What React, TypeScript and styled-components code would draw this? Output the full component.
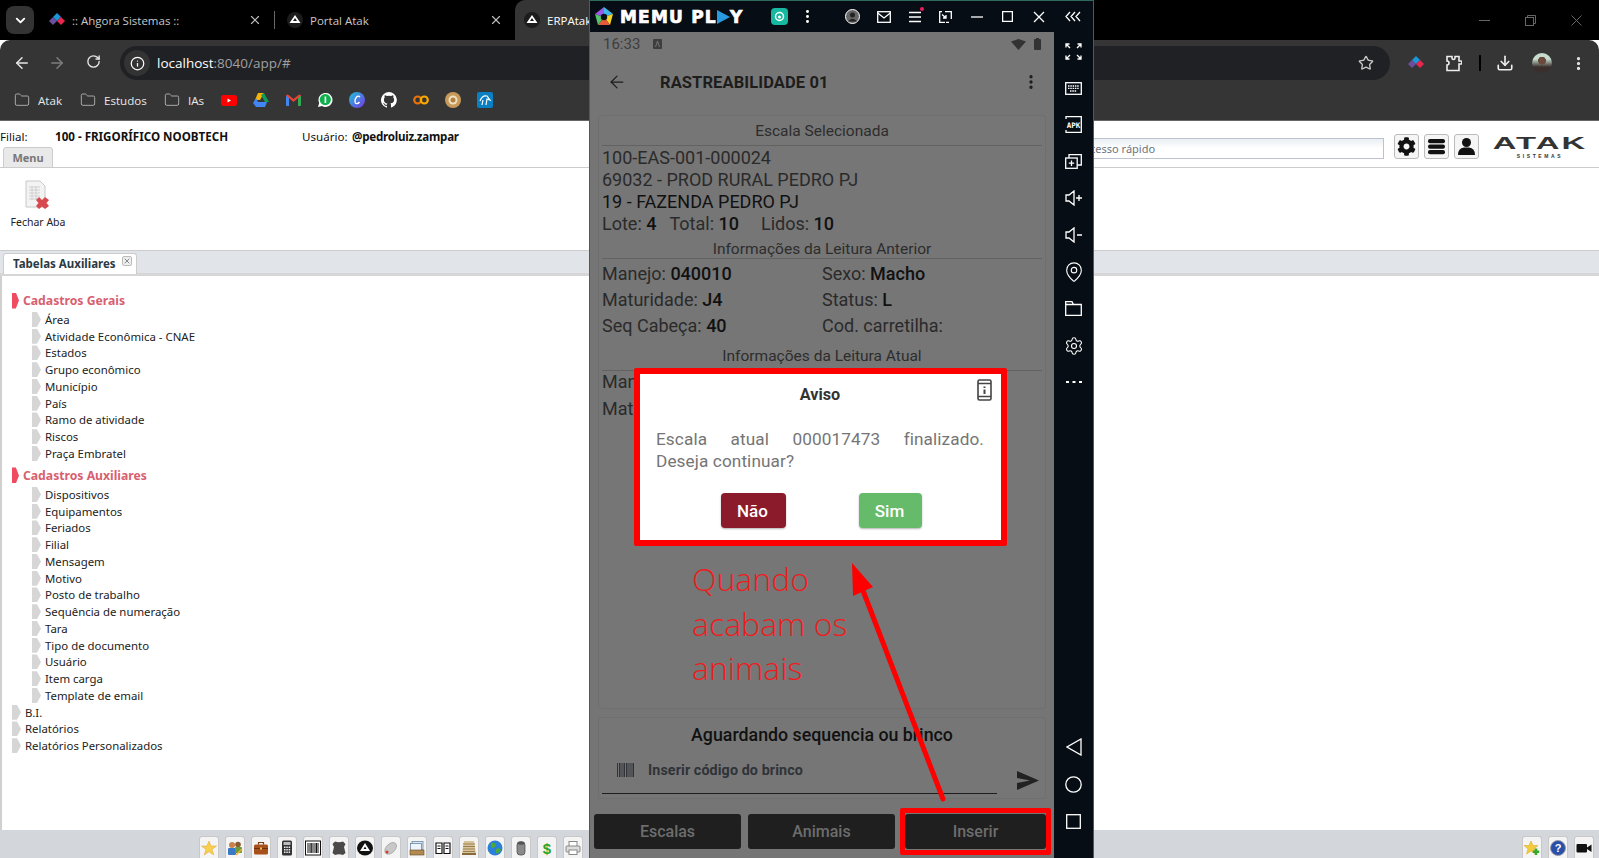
import React from "react";
import styled, { createGlobalStyle } from "styled-components";
import { FaCog } from "react-icons/fa";
import {
  ArrowLeft, ArrowRight, RotateCw, Info, Star, Download, MoreVertical, Folder, X, ChevronDown, Settings, MapPin,
} from "lucide-react";

const Global = createGlobalStyle`
  html, body { margin: 0; padding: 0; background: #fff; overflow: hidden; }
  * { box-sizing: border-box; }
`;

const Page = styled.div`
  position: relative; width: 1599px; height: 858px; overflow: hidden;
  display: flex; flex-direction: column; font-family: "Noto Sans", sans-serif; background: #fff;
`;

/* ---------- browser chrome ---------- */
const TabStrip = styled.div`
  height: 40px; background: #000; display: flex; align-items: stretch; color: #c7c7c7;
  font: 11.5px "Open Sans", sans-serif; flex: none;
`;
const TabMenu = styled.div`
  width: 28px; height: 28px; margin: 6px 15px 0 6px; border-radius: 8px; background: #333;
  display: flex; align-items: center; justify-content: center; color: #fff;
`;
const BrowserTab = styled.div<{ $w: number; $pl: number; $active?: boolean }>`
  width: ${(p) => p.$w}px; height: 40px; display: flex; align-items: center; gap: 7px; padding-left: ${(p) => p.$pl}px;
  position: relative; flex: none;
  ${(p) => p.$active && "background:#353535;border-radius:10px 10px 0 0;color:#fff;"}
`;
const TabTitle = styled.span`flex: 1; white-space: nowrap; overflow: hidden;`;
const TabClose = styled.span`display: flex; color: #bbb; margin-right: 12px;`;
const TabSep = styled.div`width: 1px; height: 18px; background: #666; align-self: center; margin: 0 10px 0 0; flex: none;`;
const Fav = styled.span`
  width: 16px; height: 16px; flex: none; display: flex; align-items: center; justify-content: center;
`;
const WinCtl = styled.div`margin-left: auto; display: flex; align-items: center; color: #666;`;
const WinBtn = styled.span`width: 46px; display: flex; justify-content: center;`;

const ToolBar = styled.div`
  height: 40px; background: #353535; border-radius: 10px 10px 0 0; display: flex; align-items: center; flex: none; color: #d8d8d8;
  padding: 6px 0 0 0;
`;
const NavBtn = styled.span<{ $dim?: boolean; $w: number }>`
  width: ${(p) => p.$w}px; display: flex; justify-content: center; color: ${(p) => (p.$dim ? "#7d7d7d" : "#e6e6e6")};
`;
const NavGroup = styled.div`display: flex; margin: 0 7px 0 4px;`;
const Omni = styled.div`
  width: 1270px; height: 34px; border-radius: 17px; background: #202124; display: flex; align-items: center; padding-left: 4px;
  font: 13.5px "Open Sans", sans-serif; color: #fff;
`;
const InfoBubble = styled.span`
  width: 26px; height: 26px; border-radius: 13px; background: #333; display: flex; align-items: center; justify-content: center; margin-right: 7px;
`;
const UrlDim = styled.span`color: #a0a0a0;`;
const OmniStar = styled.span`margin-left: auto; margin-right: 16px; display: flex; color: #c8c8c8;`;
const ExtIcons = styled.div`display: flex; align-items: center; margin-left: 15px;`;
const ExtBtn = styled.span<{ $w: number }>`width: ${(p) => p.$w}px; display: flex; justify-content: center; color: #eee;`;
const ExtSep = styled.span`width: 2px; height: 16px; background: #000; margin: 0 14px 0 0;`;
const Avatar = styled.span`
  width: 20px; height: 20px; border-radius: 50%;
  background: radial-gradient(circle at 50% 38%, #6a4a3c 24%, transparent 26%), linear-gradient(#c6dccf 30%, #3a2f2c 70%);
`;

const BookBar = styled.div`
  height: 41px; background: #353535; border-bottom: 1px solid #666; display: flex; align-items: center; padding-left: 14px; flex: none;
  color: #e8e8e8; font: 11.6px "Open Sans", sans-serif;
`;
const BookFolder = styled.span<{ $w: number }>`
  display: flex; align-items: center; gap: 8px; width: ${(p) => p.$w}px; flex: none; svg { color: #b8b8b8; }
`;
const BookIcon = styled.span`width: 32px; height: 16px; display: flex; justify-content: center; align-items: center;`;

/* ---------- ERP app ---------- */
const Header = styled.div`
  height: 26px; display: flex; align-items: flex-start; padding-top: 8px; font-size: 11.6px; line-height: 16px; color: #111; flex: none;
`;
const HeaderLabel = styled.span<{ $w: number }>`width: ${(p) => p.$w}px; flex: none;`;
const HeaderValue = styled.b<{ $w: number; $ls?: number }>`
  width: ${(p) => p.$w}px; flex: none; font-weight: 700; letter-spacing: ${(p) => p.$ls ?? 0}px;
`;
const TopRight = styled.div`
  margin-left: auto; display: flex; align-items: center; margin-top: 5px; padding-right: 12px;
`;
const QuickInput = styled.div`
  width: 310px; height: 21px; margin-top: 4px; border: 1px solid #bcc2d0; background: linear-gradient(#e9eff2, #fff 50%); color: #6c7480;
  font-size: 11px; line-height: 19px; padding-left: 8px; margin-right: 10px;
`;
const TopBtn = styled.span`
  width: 25px; height: 25px; border: 1px solid #bbb; border-radius: 3px; background: #f5f5f5; display: flex; align-items: center; justify-content: center; margin-right: 5px;
`;
const LogoBox = styled.div`
  width: 94px; margin-left: 9px; display: flex; flex-direction: column; align-items: center; color: #333; line-height: 1;
`;
const LogoName = styled.span`font: 900 16px "Liberation Sans", sans-serif; letter-spacing: 1px; transform: scaleX(2.05);`;
const LogoSub = styled.span`font: 700 5px "Liberation Sans", sans-serif; letter-spacing: 2.6px; margin-top: 0;`;

const MenuRow = styled.div`height: 21px; border-bottom: 1px solid #ccc; padding-left: 3px; flex: none;`;
const MenuTab = styled.div`
  width: 50px; height: 21px; border: 1px solid #ccc; border-radius: 3px 3px 0 0; background: #e9e9e9; color: #777; font-weight: 700; font-size: 11px;
  display: flex; align-items: center; justify-content: center;
`;
const Ribbon = styled.div`height: 82px; flex: none; padding: 12px 0 0 11px;`;
const RibbonBtn = styled.div`width: 54px; display: flex; flex-direction: column; align-items: center; font-size: 10.5px; color: #222; gap: 5px; white-space: nowrap;`;
const WorkTabs = styled.div`
  height: 26px; background: #e1e5ea; border-top: 1px solid #ccc; border-bottom: 3px solid #d6d6d6; padding: 2px 0 0 3px; flex: none;
`;
const WorkTab = styled.div`
  position: relative; width: 134px; height: 21px; background: #fff; border: 1px solid #ccc; border-bottom: none; border-radius: 3px 3px 0 0;
  font-size: 11.5px; font-weight: 700; color: #2b3a44; padding-left: 9px; line-height: 20px;
`;
const WorkClose = styled.span`
  position: absolute; right: 4px; top: 2px; width: 10px; height: 10px; border: 1px solid #bbb; border-radius: 2px; background: #eee; color: #888;
  display: flex; align-items: center; justify-content: center;
`;
const TreePane = styled.div`
  flex: 1; border-left: 2px solid #d0d0d0; padding: 15.5px 0 0 10px; font-size: 11.4px; color: #222; min-height: 0;
`;
const SectionHead = styled.div<{ $mt: number }>`
  height: 18px; display: flex; align-items: center; gap: 4px; color: #d8606f; font-weight: 700; font-size: 12.2px; margin: ${(p) => p.$mt}px 0 1.6px 0;
`;
const Chevron = styled.i<{ $red?: boolean }>`
  flex: none; display: block; width: ${(p) => (p.$red ? 7 : 9)}px; height: ${(p) => (p.$red ? 16 : 15)}px; background: ${(p) => (p.$red ? "#ee4c60" : "#d6d6d6")};
  clip-path: polygon(0 0, 55% 0, 100% 50%, 55% 100%, 0 100%);
`;
const TreeItem = styled.div<{ $top?: boolean }>`
  height: 16.75px; display: flex; align-items: center; gap: 4px; padding-left: ${(p) => (p.$top ? 0 : 20)}px; white-space: nowrap;
`;
const BottomBar = styled.div`
  height: 28px; background: #d3d6da; flex: none; display: flex; align-items: flex-end; padding-left: 199px; padding-right: 5px;
`;
const Dock = styled.div`display: flex; gap: 6px;`;
const DockRight = styled(Dock)`margin-left: auto;`;
const DockBtn = styled.span`
  width: 20px; height: 22px; background: #f4f4f4; border: 1px solid #c8c8c8; border-bottom: none; border-radius: 3px 3px 0 0; display: flex; align-items: center; justify-content: center;
`;

/* ---------- emulator window ---------- */
const Emulator = styled.div`
  position: absolute; left: 589px; top: 0; width: 505px; height: 858px; background: #070d14; border: 1px solid #2f6b5c; border-bottom: none;
  display: flex; flex-direction: column; font-family: Roboto, sans-serif;
`;
const TitleBar = styled.div`height: 31px; display: flex; align-items: center; flex: none; color: #fff; padding-left: 4px;`;
const MemuName = styled.span`
  font: 700 17px "DejaVu Sans", sans-serif; -webkit-text-stroke: 0.7px #fff; letter-spacing: 1.2px; margin-left: 6px; width: 151px; display: flex; align-items: center; white-space: nowrap;
`;
const TitleGroup = styled.div`display: flex; align-items: center;`;
const TitleBtn = styled.span<{ $w?: number }>`
  width: ${(p) => p.$w ?? 31}px; display: flex; justify-content: center; position: relative;
`;
const PinkDot = styled.i`
  position: absolute; right: 6px; top: -4px; width: 4px; height: 4px; border-radius: 50%; background: #f0185f;
`;
const EmuBody = styled.div`flex: 1; display: flex; min-height: 0;`;
const Screen = styled.div`
  width: 464px; background: #757575; display: flex; flex-direction: column; color: #2c2c2c; flex: none;
`;
const Side = styled.div`
  flex: 1; display: flex; flex-direction: column; align-items: center; padding: 0.9px 0 18.6px; color: #fff;
`;
const SideBtn = styled.span`height: 36.8px; display: flex; align-items: center; justify-content: center; width: 100%;`;
const SideSpacer = styled.div`flex: 1;`;
const StatusBar = styled.div`
  height: 24px; display: flex; align-items: center; padding: 0 13px 0 13px; color: #3e3e3e; font-size: 15px; flex: none; gap: 13px;
`;
const StatusRight = styled.div`margin-left: auto; display: flex; align-items: center; gap: 8px;`;
const AppBar = styled.div`height: 52px; display: flex; align-items: center; padding: 0 14px 0 17px; flex: none; color: #1d1d1d;`;
const AppTitle = styled.span`font-size: 16.5px; font-weight: 700; margin-left: 33px; flex: 1; letter-spacing: 0.1px;`;
const Card = styled.div`
  margin: 7px 8px 0; padding: 0 3px; border: 1px solid #6f6f6f; border-radius: 3px; background: #767676; display: flex; flex-direction: column; overflow: hidden;
`;
const MainCard = styled(Card)`height: 594px; flex: none;`;
const InputCard = styled(Card)`height: 82px; flex: none; margin-top: 8px; position: relative;`;
const Title = styled.div<{ $pt: number; $pb: number }>`
  text-align: center; font-size: 15.5px; line-height: 18px; color: #2d2d2d; padding: ${(p) => p.$pt}px 0 ${(p) => p.$pb}px; border-bottom: 1px solid #626262; flex: none;
`;
const BigBlock = styled.div`margin-top: 1px; margin-bottom: -1px;`;
const BigLine = styled.div<{ $strong?: boolean }>`
  font-size: 18px; line-height: 22px; color: ${(p) => (p.$strong ? "#111" : "#2a2a2a")}; white-space: nowrap;
`;
const Val = styled.span`font-weight: 500; color: #111;`;
const Pair = styled.span<{ $mr: number }>`margin-right: ${(p) => p.$mr}px;`;
const Grid = styled.div<{ $h: number; $mt: number }>`
  display: grid; grid-template-columns: 220px 1fr; grid-auto-rows: ${(p) => p.$h}px; align-items: center; margin-top: ${(p) => p.$mt}px;
  font-size: 18px; color: #2a2a2a; white-space: nowrap;
`;
const Waiting = styled.div`text-align: center; font-size: 17.8px; font-weight: 500; color: #111; margin-top: 6px; line-height: 22px;`;
const InputRow = styled.div`
  display: flex; align-items: center; padding: 0 0 0 15px; gap: 14px; height: 24px; margin-top: 12px; font-size: 14.3px; font-weight: 700; color: #2f3338; letter-spacing: 0.1px;
`;
const InputLine = styled.div`width: 395px; height: 1px; background: #1d1d1d; margin-top: 11px; flex: none;`;
const Send = styled.span`position: absolute; right: 6px; bottom: 8px; display: flex;`;
const ButtonRow = styled.div`display: flex; margin-top: 14.5px; padding-left: 4px; flex: none;`;
const DarkBtn = styled.div<{ $w: number; $mr: number }>`
  width: ${(p) => p.$w}px; margin-right: ${(p) => p.$mr}px; height: 35px; border-radius: 3px; background: #1f1f1f; color: #6d6d6d; font-size: 16px; font-weight: 500;
  display: flex; align-items: center; justify-content: center; flex: none;
`;

/* ---------- dialog and annotations ---------- */
const Dialog = styled.div`
  position: absolute; left: 634px; top: 368px; width: 373px; height: 178px; background: #fff; border: 6px solid #f00; border-radius: 2px;
  font-family: Roboto, sans-serif; padding: 0 17px 0 16px; display: flex; flex-direction: column;
`;
const DlgTitle = styled.div`text-align: center; font-size: 16.2px; font-weight: 700; color: #333; line-height: 20px; margin-top: 11px;`;
const DlgIcon = styled.span`position: absolute; right: 9px; top: 5px; display: flex;`;
const DlgText = styled.div`font-size: 17.2px; line-height: 22px; color: #757575; margin-top: 23px; letter-spacing: 0.1px;`;
const DlgFirst = styled.div`text-align: justify; text-align-last: justify;`;
const DlgBtns = styled.div`display: flex; margin-top: 21px; padding-left: 65px; gap: 73px;`;
const DlgBtn = styled.div<{ $bg: string; $w: number }>`
  width: ${(p) => p.$w}px; height: 35px; background: ${(p) => p.$bg}; color: #fff; border-radius: 4px; font-size: 17px; font-weight: 500; padding-right: 2px;
  display: flex; align-items: center; justify-content: center; box-shadow: 0 1px 2px rgba(0,0,0,.3);
`;
const Note = styled.div`
  position: absolute; left: 692px; top: 557px; font: 300 32px/44.5px "Open Sans", sans-serif; color: #ee1c1c;
`;
const ArrowLayer = styled.svg`position: absolute; left: 0; top: 0; pointer-events: none;`;
const RedBox = styled.div`
  position: absolute; left: 900px; top: 808px; width: 151px; height: 47px; border: 5px solid #f00; border-radius: 2px;
`;

/* ---------- drawings ---------- */
const Ahgora = ({ s = 16 }: { s?: number }) => (
  <svg width={s} height={s} viewBox="0 0 16 16">
    <polygon points="0,9 4,5 8,9 4,13" fill="#6a4ea0" />
    <polygon points="4,5 8,1 12,5 8,9" fill="#1a97d9" />
    <polygon points="8,9 12,5 16,9 12,13" fill="#e8274f" />
  </svg>
);
const AtakFav = () => (
  <svg width="16" height="16" viewBox="0 0 16 16">
    <circle cx="8" cy="8" r="8" fill="#1c1c1c" />
    <path d="M8 3 L13.5 11 H2.5 Z M8 6 L6 9 H10 Z" fill="#fff" fillRule="evenodd" />
  </svg>
);
const Fold = () => <Folder size={16} strokeWidth={1.3} />;
const Marks: React.ReactNode[] = [
  <svg key="yt" width="16" height="11" viewBox="0 0 16 11"><rect width="16" height="11" rx="2.5" fill="#f00" /><polygon points="6.5,3.5 10,5.5 6.5,7.5" fill="#fff" /></svg>,
  <svg key="dr" width="16" height="14" viewBox="0 0 16 14"><polygon points="5,0 11,0 7,7 2,7" fill="#f4b400" /><polygon points="11,0 16,9 12,9 8,2" fill="#0f9d58" /><polygon points="0,10 3,5 5,9 14,9 12,14 3,14" fill="#4285f4" /></svg>,
  <svg key="gm" width="15" height="12" viewBox="0 0 15 12"><path d="M0 1.5 L3 3 V12 H1 Q0 12 0 11Z" fill="#4285f4" /><path d="M15 1.5 L12 3 V12 H14 Q15 12 15 11Z" fill="#34a853" /><path d="M0 1.5 Q1 0 2.5 1 L7.5 5 L12.5 1 Q14 0 15 1.5 L7.5 8 Z" fill="#ea4335" /></svg>,
  <svg key="wa" width="16" height="16" viewBox="0 0 16 16"><path d="M1 15 L2.2 11 A7 7 0 1 1 5 14 Z" fill="#fff" /><circle cx="8.3" cy="7.6" r="5.6" fill="#0fb14c" /><rect x="7.6" y="4.5" width="1.6" height="6.5" fill="#fff" /></svg>,
  <svg key="cv" width="16" height="16" viewBox="0 0 16 16"><defs><linearGradient id="cvg" x1="0" y1="0" x2="1" y2="1"><stop offset="0" stopColor="#1cc4d8" /><stop offset="1" stopColor="#7a35e8" /></linearGradient></defs><circle cx="8" cy="8" r="8" fill="url(#cvg)" /><path d="M11 5 C9 2.5 5.5 6 6 10 C6.4 12.5 9 12 10.5 10" fill="none" stroke="#fff" strokeWidth="1.3" /></svg>,
  <svg key="gh" width="16" height="16" viewBox="0 0 16 16"><path fill="#fff" d="M8 0a8 8 0 0 0-2.5 15.6c.4.1.5-.2.5-.4v-1.4c-2.2.5-2.7-1-2.7-1-.4-.9-.9-1.2-.9-1.2-.7-.5.1-.5.1-.5.8.1 1.2.8 1.2.8.7 1.2 1.9.9 2.3.7.1-.5.3-.9.5-1.1-1.8-.2-3.6-.9-3.6-4 0-.9.3-1.6.8-2.1-.1-.2-.4-1 .1-2.1 0 0 .7-.2 2.2.8a7.500 7.500 0 0 1 4 0c1.500-1 2.200-.8 2.200-.8.400 1.100.200 1.900.100 2.100.500.600.800 1.300.800 2.100 0 3.100-1.900 3.700-3.700 3.900.300.300.600.800.600 1.500v2.200c0 .200.100.500.600.400A8 8 0 0 0 8 0z" /></svg>,
  <svg key="co" width="16" height="10" viewBox="0 0 16 10"><circle cx="4.700" cy="5" r="3.500" fill="none" stroke="#e8710a" strokeWidth="2.200" /><circle cx="11.300" cy="5" r="3.500" fill="none" stroke="#f9ab00" strokeWidth="2.200" /></svg>,
  <svg key="cn" width="16" height="16" viewBox="0 0 16 16"><circle cx="8" cy="8" r="8" fill="#c79a5a" /><circle cx="8" cy="8" r="4.500" fill="#f0e0c0" /><circle cx="8" cy="8" r="2.500" fill="#b08040" /></svg>,
  <svg key="bl" width="16" height="16" viewBox="0 0 16 16"><rect width="16" height="16" rx="2" fill="#0a7fc2" /><path d="M3 9 Q5 3 10 4 L13 8 L10 7 L9 13 M5 13 L6 8" fill="none" stroke="#fff" strokeWidth="1.200" /></svg>,
];
const i = (children: React.ReactNode, key: string) => (
  <svg key={key} width="16" height="16" viewBox="0 0 16 16">{children}</svg>
);
const DockIcons: React.ReactNode[] = [
  i(<polygon points="8,1 10,6 15.500,6 11,9.500 12.800,15 8,11.700 3.200,15 5,9.500 .500,6 6,6" fill="#f8d04e" stroke="#e0a030" strokeWidth=".5" />, "a"),
  i(<><circle cx="5" cy="5" r="3" fill="#c9804a" /><circle cx="11" cy="4.500" r="2.800" fill="#8a5a30" /><rect x="1" y="8" width="8" height="7" rx="1" fill="#3a78c8" /><rect x="8" y="7" width="7" height="6" rx="1" fill="#6a9a3a" /><path d="M9 15 L15 9" stroke="#f0b030" strokeWidth="1.500" /></>, "b"),
  i(<><rect x="1" y="4.500" width="14" height="10" rx="1.500" fill="#a8501c" /><path d="M5.500 4.500V2.500H10.500V4.500" fill="none" stroke="#7a3a10" strokeWidth="1.200" /><rect x="1" y="8" width="14" height="1" fill="#6a2f0c" /><rect x="7" y="7.500" width="2" height="2" fill="#f0c060" /></>, "c"),
  i(<><rect x="3" y="0.500" width="10" height="15" rx="1.500" fill="#333" /><rect x="4.500" y="2" width="7" height="3" fill="#bbb" />{[6.500, 9, 11.500].map((y) => [5, 7.300, 9.600].map((x) => <rect key={`${x}${y}`} x={x} y={y} width="1.500" height="1.500" fill="#eee" />))}</>, "d"),
  i(<><rect x=".500" y="1" width="15" height="14" fill="#fff" stroke="#111" />{[2.500, 4.500, 5.800, 7.500, 9.500, 11, 12.500].map((x) => <rect key={x} x={x} y="3" width="1" height="10" fill="#111" />)}</>, "e"),
  i(<path d="M4 1.500 Q8 3 12 1.500 L14.500 4 L13 7 L14.500 13 L12 15 Q8 13.500 4 15 L1.500 13 L3 7 L1.500 4 Z" fill="#4a4a48" />, "f"),
  i(<><ellipse cx="8" cy="8" rx="8" ry="7.500" fill="#111" /><path d="M8 3 L13 11 H3 Z M8 6.500 L6.500 9 H9.500 Z" fill="#fff" fillRule="evenodd" /></>, "g"),
  i(<><ellipse cx="8" cy="8.500" rx="4.500" ry="7" transform="rotate(45 8 8)" fill="#c8c8c8" stroke="#888" strokeWidth=".5" /><circle cx="4" cy="12" r="1.500" fill="#d04030" /></>, "h"),
  i(<><rect x="3" y="1.500" width="11" height="8" fill="#dde8f5" stroke="#5a7a9a" strokeWidth=".7" /><rect x="1.500" y="3.500" width="11" height="7" fill="#eef4fb" stroke="#5a7a9a" strokeWidth=".7" /><rect x="1" y="10" width="14" height="5" fill="#b08a50" stroke="#6a4a20" strokeWidth=".6" /></>, "j"),
  i(<><path d="M1 3 H7 V13.500 H1 Z M9 3 H15 V13.500 H9 Z" fill="#fff" stroke="#111" strokeWidth="1.200" /><path d="M2.500 6H5.500M2.500 8.500H5.500M10.500 6H13.500M10.500 8.500H13.500" stroke="#111" /></>, "k"),
  i(<><path d="M3 1 H13 L15 14 H1 Z" fill="#d8c49a" />{[3.500, 6, 8.500, 11].map((y) => <rect key={y} x="2" y={y} width="12" height="1" fill="#9a8050" />)}<rect x="1" y="13" width="14" height="2" fill="#8a6a3a" /></>, "l"),
  i(<><circle cx="8" cy="8" r="7.500" fill="#2a80d8" /><path d="M4 3 Q8 2 9 5 Q8 8 5 8 Q3 6 4 3Z M9 9 Q13 7 14 10 Q12 14 9 13Z" fill="#4aa83a" /></>, "m"),
  i(<><rect x="4" y="2" width="8" height="13" rx="3" fill="#8a8a8a" stroke="#444" strokeWidth=".7" /><ellipse cx="8" cy="3" rx="3.500" ry="1.800" fill="#555" /></>, "n"),
  i(<text x="8" y="14" textAnchor="middle" fontSize="15" fontWeight="700" fontFamily="Liberation Sans" fill="#2ea52a">$</text>, "o"),
  i(<><rect x="4" y="1.500" width="8" height="5" fill="#fff" stroke="#888" /><rect x="1" y="6" width="14" height="6" rx="1" fill="#ddd" stroke="#888" /><rect x="4" y="10" width="8" height="4.500" fill="#fff" stroke="#888" /></>, "p"),
];
const RightDock: React.ReactNode[] = [
  i(<><polygon points="7,1 9,5.500 14,5.500 10,9 11.500,14 7,11 2.500,14 4,9 0,5.500 5,5.500" fill="#f2cc3a" stroke="#d8a020" strokeWidth=".5" /><path d="M12 8.500V15M8.800 11.700H15.200" stroke="#36a82e" strokeWidth="2.500" /></>, "ra"),
  i(<><circle cx="8" cy="8" r="7.500" fill="#2a4fa8" stroke="#99a" /><text x="8" y="12" textAnchor="middle" fontSize="11" fontWeight="700" fontFamily="Liberation Sans" fill="#fff">?</text></>, "rb"),
  i(<><rect x="0.500" y="4" width="10.500" height="8.500" rx="1" fill="#111" /><polygon points="11,7.500 15.500,4.500 15.500,12 11,9" fill="#111" /></>, "rc"),
];

const Ic = ({ w = 20, h = 20, vb = "0 0 20 20", children }: { w?: number; h?: number; vb?: string; children: React.ReactNode }) => (
  <svg width={w} height={h} viewBox={vb} fill="none" stroke="currentColor" strokeWidth="1.300">{children}</svg>
);
const SideIcons: React.ReactNode[] = [
  <Ic key="1" w={17} h={17} vb="0 0 17 17"><path d="M1 1L5 5M1 4.500V1H4.500M16 1L12 5M12.500 1H16V4.500M1 16L5 12M1 12.500V16H4.500M16 16L12 12M16 12.500V16H12.500" /></Ic>,
  <Ic key="2" w={17} h={13} vb="0 0 17 13"><rect x=".7" y=".7" width="15.600" height="11.600" /><path d="M3 4H14M3 6.300H14M5 9H12" strokeDasharray="1.500 .8" /></Ic>,
  <Ic key="3" w={17} h={17} vb="0 0 17 17"><path d="M3 .7H16.300V16.300H3M1 3V.7H3M1 14V16.300H3" /><text x="8.500" y="11.500" textAnchor="middle" fontSize="7.500" fontWeight="700" fontFamily="DejaVu Sans Mono" fill="#fff" stroke="none">APK</text></Ic>,
  <Ic key="4" w={17} h={15} vb="0 0 17 15"><rect x=".7" y="4" width="11.500" height="10.300" /><path d="M4 4V.7H16.300V11H12.200M6.500 6.500V12M3.800 9.200H9.200" /></Ic>,
  <Ic key="5" w={18} h={16} vb="0 0 18 16"><path d="M1 5H4L9 1V15L4 11H1Z M11 8H17M14 5V11" /></Ic>,
  <Ic key="6" w={18} h={16} vb="0 0 18 16"><path d="M1 5H4L9 1V15L4 11H1Z M12 8H17" /></Ic>,
  <MapPin key="7" size={22} strokeWidth={1.200} />,
  <Ic key="8" w={17} h={15} vb="0 0 17 15"><path d="M.7 14.300V.7H7L8.500 3.500H16.300V14.300ZM.7 3.500H8.500" /></Ic>,
  <Settings key="9" size={20} strokeWidth={1.300} />,
  <Ic key="10" w={18} h={4} vb="0 0 18 4"><path d="M1 2H4M7.500 2H10.500M14 2H17" strokeWidth="2" /></Ic>,
];

const general = ["Área", "Atividade Econômica - CNAE", "Estados", "Grupo econômico", "Município", "País", "Ramo de atividade", "Riscos", "Praça Embratel"];
const aux = ["Dispositivos", "Equipamentos", "Feriados", "Filial", "Mensagem", "Motivo", "Posto de trabalho", "Sequência de numeração", "Tara", "Tipo de documento", "Usuário", "Item carga", "Template de email"];
const tops = ["B.I.", "Relatórios", "Relatórios Personalizados"];

export default function App() {
  return (
    <Page>
      <Global />
      <TabStrip>
        <TabMenu><ChevronDown size={15} strokeWidth={3} /></TabMenu>
        <BrowserTab $w={225} $pl={0}>
          <Fav><Ahgora /></Fav>
          <TabTitle>:: Ahgora Sistemas ::</TabTitle>
          <TabClose><X size={14} /></TabClose>
        </BrowserTab>
        <TabSep />
        <BrowserTab $w={230} $pl={2}>
          <Fav><AtakFav /></Fav>
          <TabTitle>Portal Atak</TabTitle>
          <TabClose><X size={14} /></TabClose>
        </BrowserTab>
        <BrowserTab $w={230} $pl={9} $active>
          <Fav><AtakFav /></Fav>
          <TabTitle>ERPAtak</TabTitle>
        </BrowserTab>
        <WinCtl>
          <WinBtn><svg width="11" height="11" viewBox="0 0 11 11"><path d="M0 5.500H11" stroke="currentColor" /></svg></WinBtn>
          <WinBtn><svg width="11" height="11" viewBox="0 0 11 11" fill="none" stroke="currentColor"><rect x=".5" y="2.500" width="8" height="8" /><path d="M2.500 2.500V.5H10.500V8.500H8.500" /></svg></WinBtn>
          <WinBtn><svg width="11" height="11" viewBox="0 0 11 11" stroke="currentColor"><path d="M.5.5L10.500 10.500M10.500.5L.5 10.500" /></svg></WinBtn>
        </WinCtl>
      </TabStrip>
      <ToolBar>
        <NavGroup>
          <NavBtn $w={35}><ArrowLeft size={18} strokeWidth={2} /></NavBtn>
          <NavBtn $w={35} $dim><ArrowRight size={18} strokeWidth={2} /></NavBtn>
          <NavBtn $w={39}><RotateCw size={15} strokeWidth={2.200} /></NavBtn>
        </NavGroup>
        <Omni>
          <InfoBubble><Info size={15} /></InfoBubble>
          localhost<UrlDim>:8040/app/#</UrlDim>
          <OmniStar><Star size={16} /></OmniStar>
        </Omni>
        <ExtIcons>
          <ExtBtn $w={22}><Ahgora /></ExtBtn>
          <ExtBtn $w={52}>
            <svg width="17" height="17" viewBox="0 0 17 17" fill="none" stroke="currentColor" strokeWidth="1.600"><path d="M2 1.500H7V3a1.500 1.500 0 0 0 3 0V1.500H14V6H15.500a1.500 1.500 0 0 1 0 3H14V15.500H2V10a2 2 0 0 0 0-4Z" /></svg>
          </ExtBtn>
          <ExtSep />
          <ExtBtn $w={20}><Download size={18} strokeWidth={2.200} /></ExtBtn>
          <ExtBtn $w={54}><Avatar /></ExtBtn>
          <ExtBtn $w={18}><MoreVertical size={17} strokeWidth={2.500} /></ExtBtn>
        </ExtIcons>
      </ToolBar>
      <BookBar>
        <BookFolder $w={66}><Fold />Atak</BookFolder>
        <BookFolder $w={84}><Fold />Estudos</BookFolder>
        <BookFolder $w={49}><Fold />IAs</BookFolder>
        {Marks.map((m, k) => <BookIcon key={k}>{m}</BookIcon>)}
      </BookBar>

      <Header>
        <HeaderLabel $w={55}>Filial:</HeaderLabel>
        <HeaderValue $w={247}>100 - FRIGORÍFICO NOOBTECH</HeaderValue>
        <HeaderLabel $w={50}>Usuário:</HeaderLabel>
        <HeaderValue $w={150} $ls={-0.25}>@pedroluiz.zampar</HeaderValue>
        <TopRight>
          <QuickInput>Acesso rápido</QuickInput>
          <TopBtn><FaCog size={19} color="#111" /></TopBtn>
          <TopBtn>
            <svg width="17" height="17" viewBox="0 0 17 17" fill="#111"><rect y="1" width="17" height="4.200" rx="2" /><rect y="6.500" width="17" height="4.200" rx="2" /><rect y="12" width="17" height="4.200" rx="2" /></svg>
          </TopBtn>
          <TopBtn>
            <svg width="19" height="19" viewBox="0 0 19 19" fill="#111"><circle cx="9.500" cy="5.500" r="4.500" /><path d="M1 18 Q1 11 7 10.500 H12 Q18 11 18 18Z" /></svg>
          </TopBtn>
          <LogoBox><LogoName>ATAK</LogoName><LogoSub>SISTEMAS</LogoSub></LogoBox>
        </TopRight>
      </Header>
      <MenuRow><MenuTab>Menu</MenuTab></MenuRow>
      <Ribbon>
        <RibbonBtn>
          <svg width="28" height="30" viewBox="0 0 28 30">
            <path d="M2 1H16L21 6V27H2Z" fill="#f3f3f3" stroke="#c8c8c8" />
            <path d="M5 7H16M5 10H16M5 13H16M5 16H16M5 19H14M8 6V20M12 6V20" stroke="#cfcfcf" />
            <path d="M15 17L18 20L21 17L25 20L22.500 23L25 26L21 29L18 26.500L15 29L12 26L14.500 23L12 20Z" fill="#d84a50" />
          </svg>
          Fechar Aba
        </RibbonBtn>
      </Ribbon>
      <WorkTabs>
        <WorkTab>Tabelas Auxiliares<WorkClose><X size={8} strokeWidth={3} /></WorkClose></WorkTab>
      </WorkTabs>
      <TreePane>
        <SectionHead $mt={0}><Chevron $red />Cadastros Gerais</SectionHead>
        {general.map((t) => <TreeItem key={t}><Chevron />{t}</TreeItem>)}
        <SectionHead $mt={4.600}><Chevron $red />Cadastros Auxiliares</SectionHead>
        {aux.map((t) => <TreeItem key={t}><Chevron />{t}</TreeItem>)}
        {tops.map((t) => <TreeItem key={t} $top><Chevron />{t}</TreeItem>)}
      </TreePane>
      <BottomBar>
        <Dock>{DockIcons.map((d, k) => <DockBtn key={k}>{d}</DockBtn>)}</Dock>
        <DockRight>{RightDock.map((d, k) => <DockBtn key={k}>{d}</DockBtn>)}</DockRight>
      </BottomBar>

      <Emulator>
        <TitleBar>
          <svg width="20" height="20" viewBox="0 0 20 20">
            <polygon points="10,0 19,7 10,10" fill="#3fb8e8" />
            <polygon points="19,7 16,18 10,10" fill="#f5d327" />
            <polygon points="16,18 4,18 10,10" fill="#e85a3a" />
            <polygon points="4,18 1,7 10,10" fill="#52c46a" />
            <polygon points="1,7 10,0 10,10" fill="#9a5ae8" />
            <circle cx="10" cy="10" r="3.200" fill="#0a0f16" />
          </svg>
          <MemuName>
            MEMU PL
            <svg width="13" height="14" viewBox="0 0 13 14"><polygon points="0,0 13,7 0,14" fill="#2a9ae0" /></svg>
            Y
          </MemuName>
          <TitleBtn $w={17}>
            <svg width="17" height="17" viewBox="0 0 17 17"><rect width="17" height="17" rx="4" fill="#16b8a0" /><circle cx="8.500" cy="8.500" r="4" fill="none" stroke="#fff" strokeWidth="1.500" /><circle cx="8.500" cy="9" r="1.500" fill="#fff" /></svg>
          </TitleBtn>
          <TitleBtn $w={38}><MoreVertical size={17} strokeWidth={2.200} /></TitleBtn>
          <TitleGroup>
            <TitleBtn $w={11} />
            <TitleBtn><svg width="15" height="15" viewBox="0 0 15 15"><circle cx="7.500" cy="7.500" r="7" fill="#666" stroke="#fff" /><circle cx="7.500" cy="6" r="2.500" fill="#222" /><path d="M3 12.500Q7.500 7 12 12.500" fill="#222" /></svg></TitleBtn>
            <TitleBtn><Ic w={14} h={12} vb="0 0 14 12"><rect x=".7" y=".7" width="12.600" height="10.600" /><path d="M.7 2L7 7L13.300 2" /></Ic></TitleBtn>
            <TitleBtn>
              <Ic w={14} h={12} vb="0 0 14 12"><path d="M1 1.500H13M1 6H13M1 10.500H13" /></Ic>
              <PinkDot />
            </TitleBtn>
            <TitleBtn><Ic w={13} h={12} vb="0 0 13 12"><path d="M6 .7H12.300V8M10 11.300H7M6 11.300H.7V.7H3M3 3.500L7 7M7 4V7H4" /></Ic></TitleBtn>
            <TitleBtn><Ic w={12} h={2} vb="0 0 12 2"><path d="M0 1H12" /></Ic></TitleBtn>
            <TitleBtn><Ic w={11} h={11} vb="0 0 11 11"><rect x=".6" y=".6" width="9.800" height="9.800" /></Ic></TitleBtn>
            <TitleBtn><Ic w={12} h={12} vb="0 0 12 12"><path d="M1 1L11 11M11 1L1 11" /></Ic></TitleBtn>
            <TitleBtn $w={38}><Ic w={17} h={11} vb="0 0 17 11"><path d="M5 1L1 5.500L5 10M10 1L6 5.500L10 10M15 1L11 5.500L15 10" /></Ic></TitleBtn>
          </TitleGroup>
        </TitleBar>
        <EmuBody>
          <Screen>
            <StatusBar>
              16:33
              <svg width="9" height="10" viewBox="0 0 9 10"><rect width="9" height="10" rx="1" fill="#3e3e3e" /><path d="M2.500 8L4.500 2L6.500 8" stroke="#757575" fill="none" /></svg>
              <StatusRight>
                <svg width="15" height="11" viewBox="0 0 15 11"><polygon points="0,2.500 7.500,11 15,2.500 7.500,0" fill="#333" /></svg>
                <svg width="7" height="12" viewBox="0 0 7 12"><rect y="1" width="7" height="11" rx="1" fill="#333" /><rect x="2" width="3" height="1" fill="#333" /></svg>
              </StatusRight>
            </StatusBar>
            <AppBar>
              <ArrowLeft size={20} strokeWidth={1.500} />
              <AppTitle>RASTREABILIDADE 01</AppTitle>
              <MoreVertical size={18} strokeWidth={2.400} />
            </AppBar>
            <MainCard>
              <Title $pt={6} $pb={5}>Escala Selecionada</Title>
              <BigBlock>
                <BigLine>100-EAS-001-000024</BigLine>
                <BigLine>69032 - PROD RURAL PEDRO PJ</BigLine>
                <BigLine $strong>19 - FAZENDA PEDRO PJ</BigLine>
                <BigLine><Pair $mr={13}>Lote: <Val>4</Val></Pair><Pair $mr={22}>Total: <Val>10</Val></Pair>Lidos: <Val>10</Val></BigLine>
              </BigBlock>
              <Title $pt={6} $pb={0}>Informações da Leitura Anterior</Title>
              <Grid $h={26} $mt={1.500}>
                <span>Manejo: <Val>040010</Val></span><span>Sexo: <Val>Macho</Val></span>
                <span>Maturidade: <Val>J4</Val></span><span>Status: <Val>L</Val></span>
                <span>Seq Cabeça: <Val>40</Val></span><span>Cod. carretilha:</span>
              </Grid>
              <Title $pt={8} $pb={5}>Informações da Leitura Atual</Title>
              <Grid $h={27} $mt={-3}>
                <span>Manejo:</span><span />
                <span>Maturidade:</span><span />
              </Grid>
            </MainCard>
            <InputCard>
              <Waiting>Aguardando sequencia ou brinco</Waiting>
              <InputRow>
                <svg width="17" height="14" viewBox="0 0 17 14" fill="#2f3338">{[0, 2, 3.500, 5.500, 7, 9, 10.500, 12.500, 14.500, 16].map((x) => <rect key={x} x={x} width="1" height="14" />)}</svg>
                Inserir código do brinco
              </InputRow>
              <InputLine />
              <Send><svg width="22" height="19" viewBox="0 0 22 19" fill="#222"><polygon points="0,0 22,9.500 0,19 0,12 13,9.500 0,7" /></svg></Send>
            </InputCard>
            <ButtonRow>
              <DarkBtn $w={147} $mr={7}>Escalas</DarkBtn>
              <DarkBtn $w={147} $mr={10}>Animais</DarkBtn>
              <DarkBtn $w={141} $mr={0}>Inserir</DarkBtn>
            </ButtonRow>
          </Screen>
          <Side>
            {SideIcons.map((s, k) => <SideBtn key={k}>{s}</SideBtn>)}
            <SideSpacer />
            <SideBtn><Ic w={16} h={18} vb="0 0 16 18"><path d="M15 1V17L1 9Z" /></Ic></SideBtn>
            <SideBtn><Ic w={17} h={17} vb="0 0 17 17"><circle cx="8.500" cy="8.500" r="7.700" /></Ic></SideBtn>
            <SideBtn><Ic w={15} h={15} vb="0 0 15 15"><rect x=".7" y=".7" width="13.600" height="13.600" /></Ic></SideBtn>
          </Side>
        </EmuBody>
      </Emulator>

      <Dialog>
        <DlgTitle>Aviso</DlgTitle>
        <DlgIcon>
          <svg width="15" height="22" viewBox="0 0 15 22" fill="none" stroke="#444" strokeWidth="1.600"><rect x="1" y="1" width="13" height="20" rx="1.500" /><path d="M1 4.500H14M1 17.500H14" /><path d="M7.500 7.500V9M7.500 10.500V15" strokeWidth="2" /></svg>
        </DlgIcon>
        <DlgText>
          <DlgFirst>Escala atual 000017473 finalizado.</DlgFirst>
          Deseja continuar?
        </DlgText>
        <DlgBtns>
          <DlgBtn $bg="#8b1a2a" $w={65}>Não</DlgBtn>
          <DlgBtn $bg="#66bb6a" $w={63}>Sim</DlgBtn>
        </DlgBtns>
      </Dialog>
      <Note>Quando<br />acabam os<br />animais</Note>
      <ArrowLayer width="1599" height="858">
        <line x1="943" y1="799" x2="862" y2="588" stroke="#f00" strokeWidth="5" strokeLinecap="round" />
        <polygon points="852,563 873,587 853,596" fill="#f00" />
      </ArrowLayer>
      <RedBox />
    </Page>
  );
}
